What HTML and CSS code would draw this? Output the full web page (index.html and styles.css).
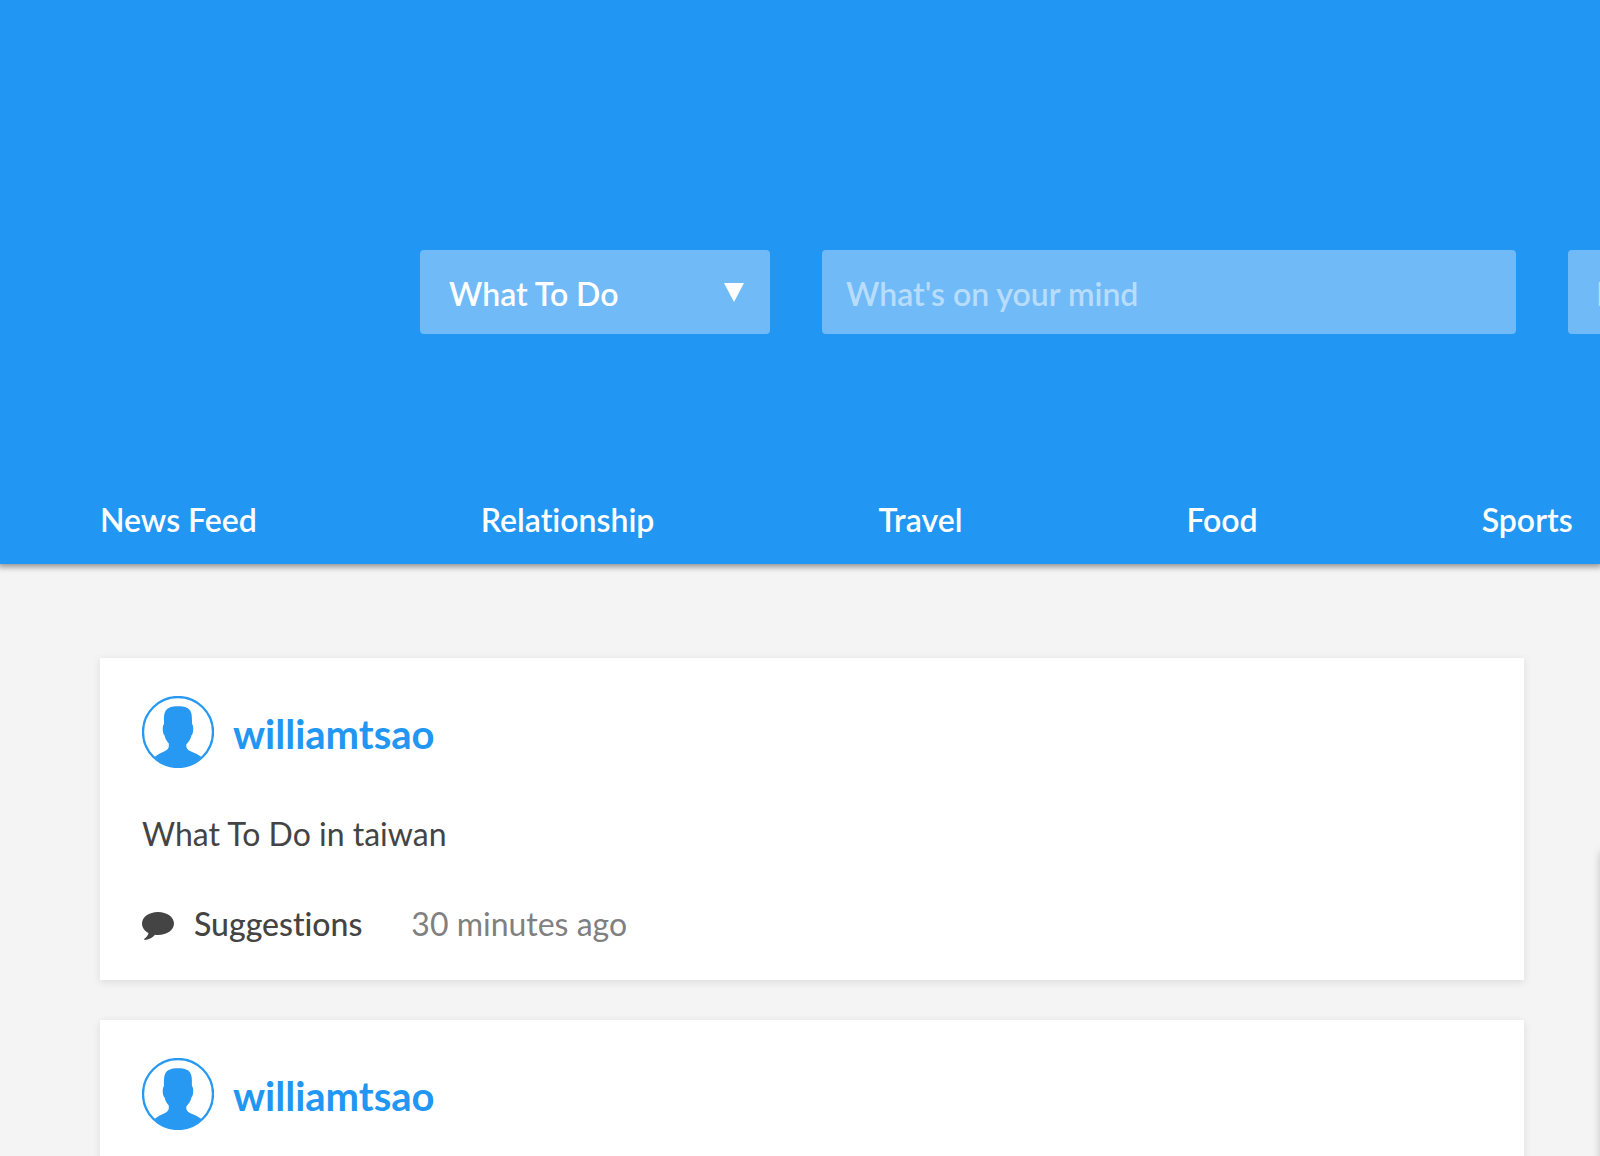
FILE: index.html
```html
<!DOCTYPE html>
<html lang="en">
<head>
<meta charset="utf-8">
<meta name="viewport" content="width=device-width, initial-scale=1">
<title>News Feed</title>
<link rel="stylesheet" href="styles.css">
</head>
<body>
<svg class="sprite" aria-hidden="true">
  <symbol id="avatar" viewBox="0 0 72 72">
    <circle cx="36" cy="36" r="35" fill="#fff"/>
    <path d="M12.500 61 Q18 57 23 55 Q26.800 53.200 26.800 50 V47.500 C24 44 23 42 22.600 39.500 C20.500 38 20 30 22 28 C22 18 21 10.200 36 10.200 C51 10.200 50 18 50 28 C52 30 51.500 38 49.400 39.500 C49 42.500 47 45.500 44.300 48.500 V50 Q44.300 53.200 48 55 Q53.500 57 59.500 61 A35 35 0 0 1 36 71 A35 35 0 0 1 12.500 61Z" fill="#2899f2"/>
    <circle cx="36" cy="36" r="35" fill="none" stroke="#2899f2" stroke-width="2.300"/>
  </symbol>
  <symbol id="comment" viewBox="0 0 32 28">
    <path d="M16 0C7 0 0 5 0 11.500C0 15.500 2.600 19 6.500 21C6 23.500 4.500 25.200 2.400 26.800C1.800 27.400 2.200 28 3 28C7.500 27.500 10.500 25.500 13 22.800C14 23 15 23 16 23C25 23 32 18 32 11.500S25 0 16 0Z" fill="currentColor"/>
  </symbol>
</svg>

<header class="header">
  <form class="composer">
    <div class="picker">
      <select class="field picker-select" aria-label="Topic">
        <option>What To Do</option>
      </select>
      <svg class="picker-arrow" viewBox="0 0 20 20" aria-hidden="true"><path d="M0 1H20L10 20Z" fill="#fff"/></svg>
    </div>
    <input class="field" type="text" placeholder="What's on your mind" aria-label="What's on your mind">
    <input class="field field-place" type="text" placeholder="Location" aria-label="Location">
  </form>
  <nav class="nav">
    <a class="nav-link" href="#">News Feed</a>
    <a class="nav-link" href="#">Relationship</a>
    <a class="nav-link" href="#">Travel</a>
    <a class="nav-link" href="#">Food</a>
    <a class="nav-link" href="#">Sports</a>
  </nav>
</header>

<div class="content">
  <main class="feed">
    <article class="card">
      <a class="author" href="#"><svg class="avatar" aria-hidden="true"><use href="#avatar"/></svg><span class="author-name">williamtsao</span></a>
      <p class="message">What To Do in taiwan</p>
      <footer class="meta">
        <a class="suggestions" href="#"><svg class="comment" aria-hidden="true"><use href="#comment"/></svg>Suggestions</a>
        <time class="time">30 minutes ago</time>
      </footer>
    </article>
    <article class="card">
      <a class="author" href="#"><svg class="avatar" aria-hidden="true"><use href="#avatar"/></svg><span class="author-name">williamtsao</span></a>
    </article>
  </main>
  <aside class="side"></aside>
</div>
</body>
</html>
```
FILE: styles.css
```css
* {
  box-sizing: border-box;
}

html {
  height: 100%;
  overflow: hidden;
}

body {
  height: 100%;
  margin: 0;
  overflow: hidden;
  background: #f4f4f4;
  color: #444;
  font-family: Lato, "Open Sans", sans-serif;
  font-size: 32px;
  font-variant-ligatures: none;
  line-height: 40px;
}

a {
  color: inherit;
  text-decoration: none;
}

.sprite {
  display: none;
}

.header {
  padding-top: 250px;
  background: #2196f3;
  color: #fff;
  box-shadow: 0 1px 6px 2px rgba(0, 0, 0, 0.4);
}

/* The last field runs past the right edge of the window. */
.composer {
  display: grid;
  grid-template-columns: 350px 1fr 350px;
  gap: 52px;
  margin: 0 -318px 0 420px;
}

.field {
  width: 100%;
  height: 84px;
  padding: 3px 24px 0;
  border: 0;
  border-radius: 4px;
  background: #70baf8;
  color: #fff;
  font: inherit;
  font-weight: 600;
}

.field::placeholder {
  color: #b8ddfb;
  opacity: 1;
}

.field-place {
  padding-left: 28px;
}

.picker {
  position: relative;
}

.picker-select {
  appearance: none;
  padding-left: 29px;
}

.picker-arrow {
  position: absolute;
  top: 32px;
  right: 26px;
  width: 20px;
  height: 20px;
  pointer-events: none;
}

.nav {
  display: flex;
  gap: 224px;
  padding: 166px 0 24px 100px;
  font-weight: 600;
  white-space: nowrap;
}

.content {
  display: flex;
  padding: 94px 0 0 100px;
}

.feed {
  display: flex;
  flex: 1;
  flex-direction: column;
  gap: 40px;
}

.card {
  min-height: 322px;
  padding: 38px 42px 36px;
  background: #fff;
  box-shadow: 0 2px 8px rgba(0, 0, 0, 0.1);
}

.author {
  display: flex;
  align-items: center;
  gap: 19px;
  color: #2196f3;
  font-size: 40px;
  font-weight: 700;
}

.avatar {
  width: 72px;
  height: 72px;
}

.author-name {
  padding-top: 4px;
}

.message {
  margin: 46px 0 50px;
}

.meta {
  display: flex;
  gap: 49px;
}

.suggestions {
  display: flex;
  align-items: center;
  gap: 20px;
  font-weight: 500;
}

.comment {
  width: 32px;
  height: 28px;
  margin-top: 4px;
}

.time {
  color: #808080;
}

/* The side panel starts at the window's right edge, so only its shadow shows. */
.side {
  flex: none;
  width: 400px;
  height: 600px;
  margin: 192px -400px 0 76px;
  background: #fff;
  box-shadow: 0 2px 8px rgba(0, 0, 0, 0.2);
}
```
